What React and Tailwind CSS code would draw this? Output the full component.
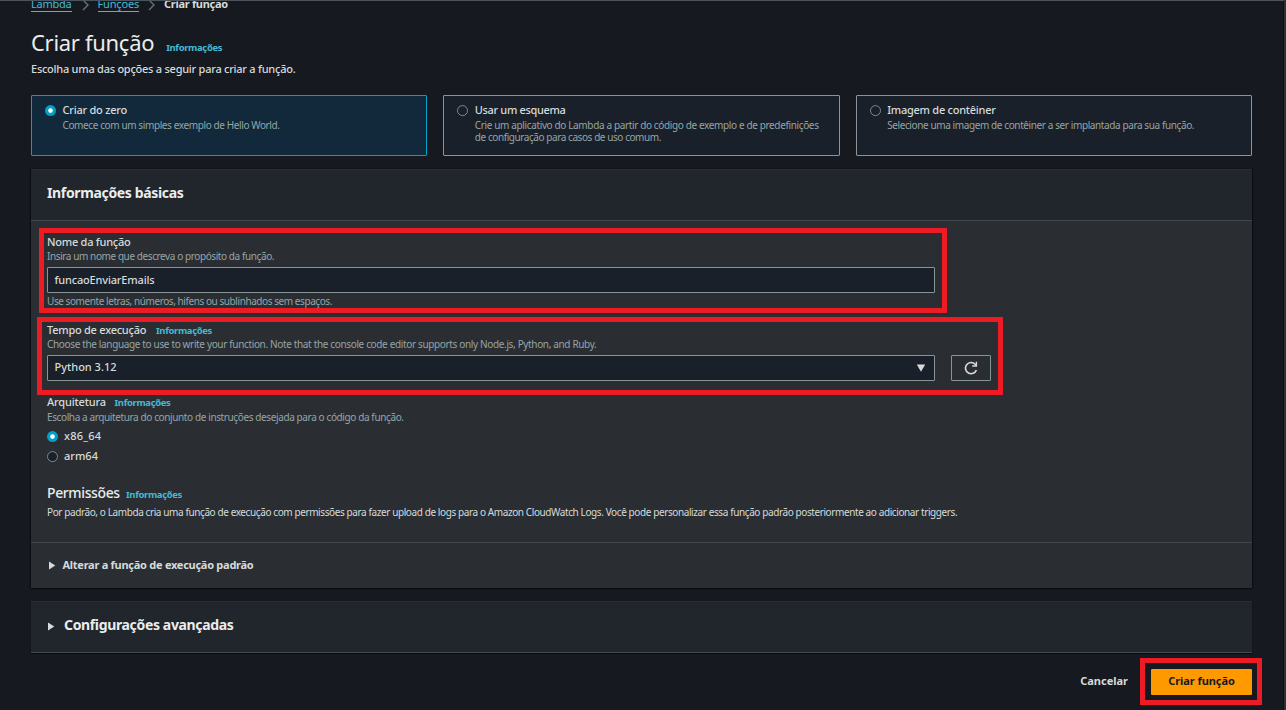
import React from "react";

function Info({ className = "" }) {
  return (
    <a className={`font-bold text-[9.5px] leading-[12px] tracking-[-0.36px] text-[#44b9d6] ${className}`}>
      Informações
    </a>
  );
}

function Radio({ checked = false, className = "" }) {
  return (
    <svg width="12" height="12" viewBox="0 0 12 12" className={`shrink-0 ${className}`}>
      {checked ? (
        <>
          <circle cx="5.5" cy="5.6" r="5.5" fill="#00a1c9" />
          <circle cx="5.5" cy="5.6" r="2.3" fill="#ffffff" />
        </>
      ) : (
        <circle cx="5.5" cy="5.6" r="5" fill="#1a2029" stroke="#879596" strokeWidth="0.9" />
      )}
    </svg>
  );
}

function Card({ selected = false, title, titleClass, children }) {
  return (
    <div
      className={`flex h-[61px] flex-1 rounded-[1px] border pl-[13px] pt-[7px] ${
        selected ? "border-[#00a1c9] bg-[#12293b]" : "border-[#879596] bg-[#1a2029]"
      }`}
    >
      <Radio checked={selected} className="mt-[2px]" />
      <div className="ml-[5.5px] whitespace-nowrap">
        <div className={`text-[11px] font-medium leading-[14px] ${titleClass}`}>{title}</div>
        <div className="mt-[2px] text-[10px] leading-[12px] text-[#95a5a6]">{children}</div>
      </div>
    </div>
  );
}

function Chevron() {
  return (
    <svg width="7" height="12" viewBox="0 0 7 12" fill="none" className="shrink-0">
      <path d="M1 1L6 6L1 11" stroke="#687078" strokeWidth="1.4" />
    </svg>
  );
}

function Caret() {
  return (
    <svg width="7" height="9" viewBox="0 0 7 9" className="shrink-0">
      <path d="M0 0.5L6.3 4.5L0 8.5Z" fill="#d5dbdb" />
    </svg>
  );
}

export default function App() {
  return (
    <div className="relative h-[710px] w-[1286px] overflow-hidden whitespace-nowrap border-r-2 border-[#2f3234] bg-[#16191f] pl-[31px] font-['Noto_Sans',sans-serif] text-[#d5dbdb] shadow-[inset_-1px_0_0_0_#0d0f12]">
      <nav className="-mt-[3px] flex h-[15px] text-[11px] leading-[14px]">
        <a className="h-[15px] border-b border-[#44b9d6] tracking-[-0.23px] text-[#44b9d6]">Lambda</a>
        <span className="ml-[10px] mr-[9px] mt-[2px]"><Chevron /></span>
        <a className="h-[15px] border-b border-[#44b9d6] tracking-[-0.17px] text-[#44b9d6]">Funções</a>
        <span className="ml-[9px] mr-[9px] mt-[2px]"><Chevron /></span>
        <span className="font-bold tracking-[-0.3px]">Criar função</span>
      </nav>

      <header className="mt-[16px] h-[67px]">
        <div className="flex items-baseline">
          <h1 className="text-[22px] leading-[28px] tracking-[-0.3px] text-[#eaeded]">Criar função</h1>
          <Info className="ml-[12px]" />
        </div>
        <p className="mt-[6px] text-[11px] font-medium leading-[14px] tracking-[-0.25px]">
          Escolha uma das opções a seguir para criar a função.
        </p>
      </header>

      <div className="flex w-[1221px] gap-[16px]">
        <Card selected title="Criar do zero" titleClass="tracking-[-0.24px]">
          <div className="tracking-[-0.39px]">Comece com um simples exemplo de Hello World.</div>
        </Card>
        <Card title="Usar um esquema" titleClass="tracking-[-0.35px]">
          <div className="tracking-[-0.365px]">
            Crie um aplicativo do Lambda a partir do código de exemplo e de predefinições
          </div>
          <div className="tracking-[-0.43px]">de configuração para casos de uso comum.</div>
        </Card>
        <Card title="Imagem de contêiner" titleClass="tracking-[-0.26px]">
          <div className="tracking-[-0.395px]">
            Selecione uma imagem de contêiner a ser implantada para sua função.
          </div>
        </Card>
      </div>

      <section className="mt-[13px] h-[419px] w-[1221px] bg-[#2a2e33] shadow-[0_1px_1px_0_#0a0c0f,1px_0_1px_0_#0d0f12,-1px_0_1px_0_#0d0f12]">
        <div className="h-[52px] border-b border-t border-b-[#414750] border-t-[#2a2e33] bg-[#21252c] pl-[16px] pt-[14px]">
          <h2 className="text-[14px] font-bold leading-[18px] tracking-[-0.35px] text-[#eaeded]">
            Informações básicas
          </h2>
        </div>

        <div className="h-[321px] pl-[16px] pt-[14px]">
          <div className="text-[11px] font-medium leading-[14px] tracking-[-0.25px]">Nome da função</div>
          <div className="mt-px text-[10px] leading-[12px] tracking-[-0.41px] text-[#95a5a6]">
            Insira um nome que descreva o propósito da função.
          </div>
          <div className="mt-[5px] h-[26px] w-[888px] rounded-[1px] border border-[#879596] bg-[#1a2029] pl-[6.5px] text-[11px] font-medium leading-[24px] tracking-[-0.17px]">
            funcaoEnviarEmails
          </div>
          <div className="mt-[2px] text-[10px] leading-[12px] tracking-[-0.43px] text-[#95a5a6]">
            Use somente letras, números, hifens ou sublinhados sem espaços.
          </div>

          <div className="mt-[16px] flex h-[14px] items-baseline">
            <span className="w-[109px] text-[11px] font-medium leading-[14px] tracking-[-0.25px]">Tempo de execução</span>
            <Info />
          </div>
          <div className="mt-px text-[10px] leading-[12px] tracking-[-0.35px] text-[#95a5a6]">
            Choose the language to use to write your function. Note that the console code editor supports only Node.js, Python, and Ruby.
          </div>
          <div className="mt-[5px] flex gap-[16px]">
            <div className="flex h-[26px] w-[888px] items-center justify-between rounded-[1px] border border-[#879596] bg-[#1a2029] pl-[6.5px] pr-[8px]">
              <span className="pb-[2px] text-[11px] font-medium leading-[14px]">Python 3.12</span>
              <svg width="10" height="8" viewBox="0 0 10 8">
                <path d="M0.8 0.5H9.2L5 7.7Z" fill="#d5dbdb" />
              </svg>
            </div>
            <div className="flex h-[26px] w-[40px] items-center justify-center rounded-[1px] border border-[#879596]">
              <svg width="14" height="14" viewBox="0 0 14 14" fill="none" stroke="#d5dbdb">
                <path d="M12.4 9A5.6 5.6 0 1 1 11.2 3.3L12.2 4.4" strokeWidth="1.6" />
                <path d="M12.4 0.8V5H8.2" strokeWidth="1.4" />
              </svg>
            </div>
          </div>

          <div className="mt-[14px] flex h-[14px] items-baseline">
            <span className="w-[67.5px] text-[11px] font-medium leading-[14px] tracking-[-0.17px]">Arquitetura</span>
            <Info />
          </div>
          <div className="mt-[2px] text-[10px] leading-[12px] tracking-[-0.385px] text-[#95a5a6]">
            Escolha a arquitetura do conjunto de instruções desejada para o código da função.
          </div>
          <div className="mt-[6px] flex h-[14px] items-center gap-[5px] text-[11px] font-medium leading-[14px] tracking-[0.22px]">
            <Radio checked className="mt-px" />
            x86_64
          </div>
          <div className="mt-[6px] flex h-[14px] items-center gap-[5px] text-[11px] font-medium leading-[14px]">
            <Radio className="mt-px" />
            arm64
          </div>

          <div className="mt-[21px] flex h-[18px] items-baseline">
            <h3 className="w-[79px] text-[14px] font-medium leading-[18px] tracking-[-0.38px] text-[#eaeded]">Permissões</h3>
            <Info />
          </div>
          <p className="mt-[4px] text-[10px] leading-[12px] tracking-[-0.401px]">
            Por padrão, o Lambda cria uma função de execução com permissões para fazer upload de logs para o Amazon CloudWatch Logs. Você pode personalizar essa função padrão posteriormente ao adicionar triggers.
          </p>
        </div>

        <div className="flex h-[46px] items-center gap-[6.5px] border-t border-[#414750] pl-[18px]">
          <Caret />
          <span className="pb-[2px] text-[11px] font-bold leading-[14px] tracking-[-0.265px]">
            Alterar a função de execução padrão
          </span>
        </div>
      </section>

      <section className="mt-[13px] flex h-[52px] w-[1221px] items-center gap-[9px] border-b border-t border-b-[#414750] border-t-[#2a2e33] bg-[#21252c] pb-[2px] pl-[17px] shadow-[0_1px_1px_0_#0a0c0f]">
        <Caret />
        <h2 className="pb-[2px] text-[14px] font-bold leading-[18px] tracking-[-0.35px] text-[#eaeded]">
          Configurações avançadas
        </h2>
      </section>

      <footer className="mt-[16px] flex h-[26px] w-[1221px] items-center justify-end text-[11px] font-bold leading-[14px]">
        <span className="mr-[23px] pb-[2px]">Cancelar</span>
        <button className="h-[26px] w-[101px] rounded-[1px] bg-[#ff9900] pb-[2px] tracking-[-0.05px] text-[#16191f]">
          Criar função
        </button>
      </footer>

      <div className="absolute left-0 top-0 h-px w-[1286px] bg-[#4b535c]" />
      <div className="absolute left-[39px] top-[228px] h-[85px] w-[908px] border-5 border-[#ed1c24]" />
      <div className="absolute left-[37px] top-[317px] h-[78px] w-[966px] border-5 border-[#ed1c24]" />
      <div className="absolute left-[1140px] top-[658px] h-[47px] w-[122px] border-5 border-[#ed1c24]" />
    </div>
  );
}
